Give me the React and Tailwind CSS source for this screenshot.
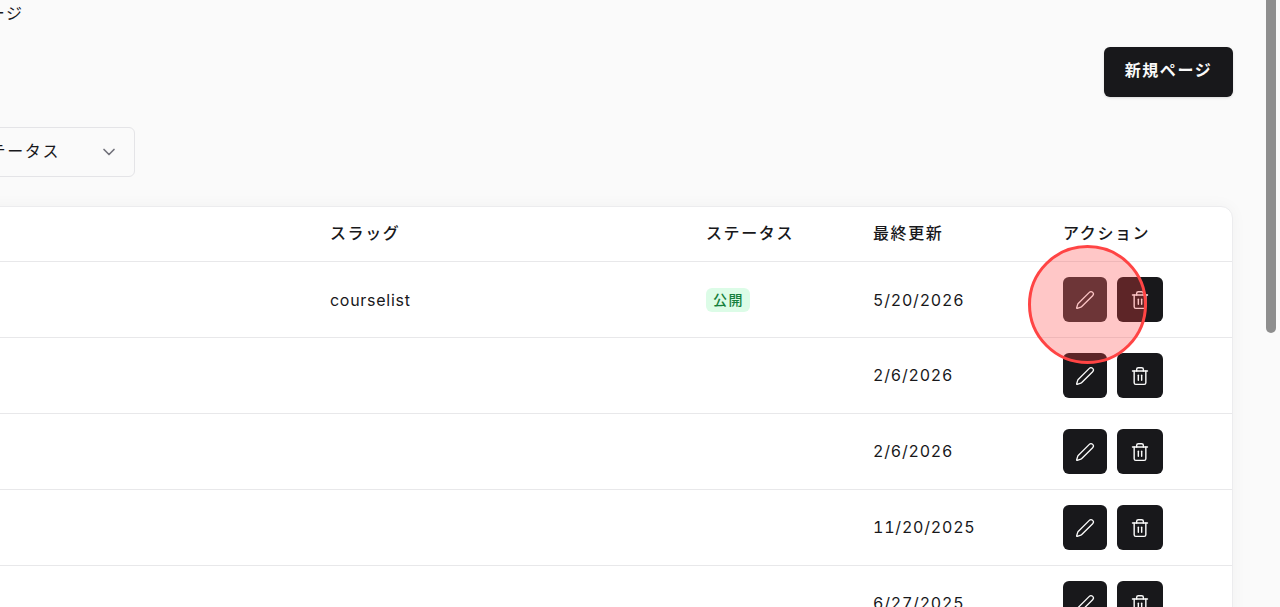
import React from 'react';
import { ChevronDown, Pen, Trash2 } from 'lucide-react';

const rows = [
  { slug: 'courselist', status: '公開', date: '5/20/2026', hover: true },
  { slug: '', status: '', date: '2/6/2026' },
  { slug: '', status: '', date: '2/6/2026' },
  { slug: '', status: '', date: '11/20/2025' },
  { slug: '', status: '', date: '6/27/2025' },
];

const rowGrid = 'grid grid-cols-[433px_376px_167px_190px_170px] items-center';

export default function App() {
  return (
    <div className="relative h-[607px] overflow-hidden bg-[#fafafa] text-[#18181b] font-['Inter','Noto_Sans_CJK_JP',sans-serif] text-base">
      <div className="ml-[-104px] w-[1337px]">
        <div className="h-[47px] pl-[40px] pt-[1px] text-base leading-6 tracking-[0.1em]">固定ページ</div>

        <div className="flex justify-end">
          <button className="flex h-[50px] w-[129px] items-center justify-center rounded-md bg-[#18181b] pb-[4px] font-semibold tracking-[0.1em] text-[#fafafa] shadow-sm">
            新規ページ
          </button>
        </div>

        <div className="mt-[30px] flex h-[50px] w-[239px] items-center justify-between rounded-md border border-[#e4e4e7] pb-[3px] pl-[75px] pr-[15px]">
          <span className="tracking-[0.1em]">ステータス</span>
          <ChevronDown className="mt-[3px] h-5 w-5 text-[#71717a]" />
        </div>

        <div className="mt-[29px] rounded-xl border border-[#ececee] bg-white shadow-[0_0_16px_rgba(0,0,0,0.04)]">
          <div className={`${rowGrid} h-[55px] border-b border-[#e8e8ea] pb-[2px] font-medium tracking-[0.1em]`}>
            <div />
            <div>スラッグ</div>
            <div>ステータス</div>
            <div>最終更新</div>
            <div>アクション</div>
          </div>
          {rows.map((row, i) => (
            <div key={i} className={`${rowGrid} h-[76px] border-b border-[#e8e8ea]`}>
              <div />
              <div className="tracking-[0.045em]">{row.slug}</div>
              <div>
                {row.status && (
                  <span className="inline-block rounded-md bg-[#dcfce7] py-[2px] pl-[7px] pr-[6px] text-sm font-medium tracking-[0.1em] text-[#15803d]">
                    {row.status}
                  </span>
                )}
              </div>
              <div className={`tabular-nums tracking-[0.05em] ${row.hover ? '' : 'pb-[1px]'}`}>{row.date}</div>
              <div className="flex gap-[10px]">
                <button className={`flex h-[45px] w-[44px] items-center justify-center rounded-md text-[#fafafa] ${row.hover ? 'bg-[#2f2f32]' : 'bg-[#18181b]'}`}>
                  <Pen className="h-5 w-5" strokeWidth={1.6} />
                </button>
                <button className="flex h-[45px] w-[46px] items-center justify-center rounded-md bg-[#18181b] text-[#fafafa]">
                  <Trash2 className="h-5 w-5" strokeWidth={1.7} />
                </button>
              </div>
            </div>
          ))}
        </div>
      </div>

      {/* scrollbar */}
      <div className="absolute right-[4px] top-0 h-[333px] w-[10px] rounded-b-full bg-[#8e8e8e]" />

      {/* tap highlight */}
      <div className="absolute left-[1028px] top-[245px] h-[119px] w-[119px] rounded-full border-[3px] border-[#ff4444] bg-[#ff4444]/30" />
    </div>
  );
}
